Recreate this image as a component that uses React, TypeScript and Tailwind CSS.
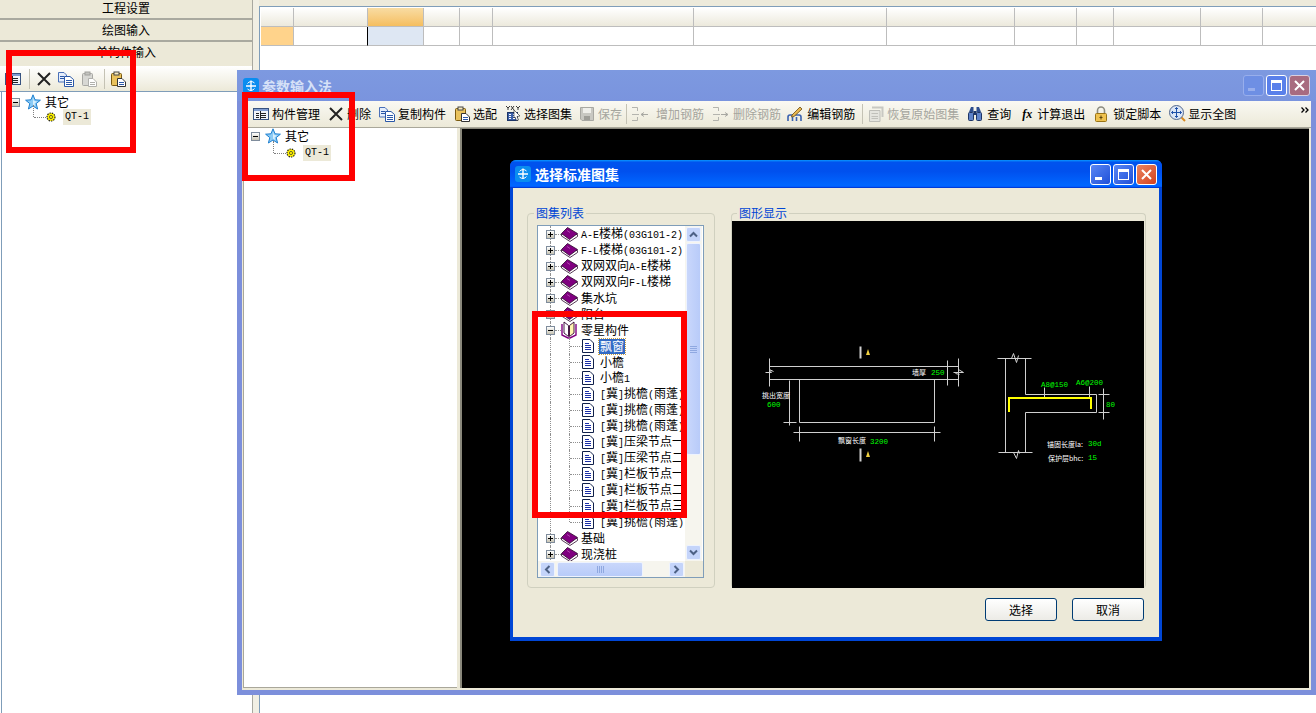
import React from 'react';

// Old Windows XP "Luna" app screenshot. Windows sit on a free canvas, everything inside them flows.

const Sim = ({ text }: { text: string }) => {
  const parts = text.split(/([\x20-\x7e]+)/).filter(Boolean);
  return (
    <>
      {parts.map((p, i) =>
        /^[\x20-\x7e]+$/.test(p) ? (
          <span key={i} className="font-['Liberation_Mono',monospace] text-[10px] whitespace-pre">
            {p}
          </span>
        ) : (
          <span key={i}>{p}</span>
        ),
      )}
    </>
  );
};

const AppIcon = () => (
  <svg width="16" height="16" viewBox="0 0 16 16" className="shrink-0">
    <rect x="0" y="0" width="16" height="16" rx="3" fill="#0A8DF0" />
    <path d="M8 2.5V13M3 8H13" stroke="#fff" strokeWidth="1.4" />
    <path d="M4.5 5.5A4.5 4.5 0 0 1 11.5 5M11.5 10.5A4.5 4.5 0 0 1 4.5 11" stroke="#fff" fill="none" />
  </svg>
);

const Star = () => (
  <svg width="16" height="16" viewBox="0 0 16 16" className="shrink-0">
    <path d="M8 .8 10 5.8 15.4 6.2 11.2 9.6 12.6 15 8 12 3.4 15 4.8 9.6.6 6.2 6 5.8Z" fill="#8CCBF5" stroke="#1D7FD0" />
    <path d="M8 4 9 7 12 7.5 9.6 9.5 10 12 8 10.5Z" fill="#D9F0FD" />
  </svg>
);

const Gear = () => (
  <svg width="10" height="10" viewBox="0 0 10 10" className="shrink-0">
    <circle cx="5" cy="5" r="4" fill="#FFF200" stroke="#222" strokeWidth="1.2" strokeDasharray="1.4 1" />
    <circle cx="5" cy="5" r="1.6" fill="#FFF200" stroke="#333" strokeWidth=".7" />
  </svg>
);

const Book = () => (
  <svg width="17" height="15" viewBox="0 0 17 15" className="shrink-0 -mr-px">
    <path d="M.5 7V9L9 14.5 16.5 9.5V7.5Z" fill="#fff" stroke="#2C0A2C" strokeWidth=".8" />
    <path d="M.5 6.5 6.5.5 16.5 6.5 8.5 12.5Z" fill="#800080" stroke="#2C0A2C" strokeWidth=".8" />
    <path d="M6 3.5 9 5.5" stroke="#B040B0" />
  </svg>
);

const OpenBook = () => (
  <svg width="16" height="18" viewBox="0 0 16 18" className="shrink-0 -my-px">
    <path d="M1 3V14L7 17H9L15 14V3" fill="#fff" stroke="#800080" strokeWidth="1.4" />
    <path d="M3 1 7.5 4.5V15.5L3 12Z" fill="#fff" stroke="#300030" strokeWidth=".9" />
    <path d="M13 1 8.5 4.5V15.5L13 12Z" fill="#FFF6B0" stroke="#300030" strokeWidth=".9" />
  </svg>
);

const Doc = () => (
  <svg width="12" height="14" viewBox="0 0 12 14" className="shrink-0">
    <path d="M.5.5H8L11.5 4V13.5H.5Z" fill="#fff" stroke="#10204A" />
    <path d="M3 4.5H7M3 6.5H9M3 8.5H9M3 10.5H9" stroke="#1B2FA8" />
  </svg>
);

const TableIcon = () => (
  <svg width="16" height="16" viewBox="0 0 16 16" className="shrink-0">
    <rect x=".5" y="2.5" width="15" height="11" fill="#F2F5FA" stroke="#37527F" />
    <rect x="1" y="3" width="14" height="2" fill="#7F9CD0" />
    <path d="M3 7.5H6M3 9.5H6M3 11.5H6M8 7.5H13M8 9.5H13M8 11.5H13M7.5 5V13" stroke="#222" />
  </svg>
);

const XIcon = () => (
  <svg width="16" height="16" viewBox="0 0 16 16" className="shrink-0">
    <path d="M2 2 14 14M14 2 2 14" stroke="#222" strokeWidth="2" />
  </svg>
);

const CopyIcon = () => (
  <svg width="16" height="16" viewBox="0 0 16 16" className="shrink-0">
    <path d="M.5 1.5H6L8.5 4V11H.5Z" fill="#E6EEFB" stroke="#4A70B8" />
    <path d="M6.5 5.5H12L15.5 8.5V15.5H6.5Z" fill="#fff" stroke="#2B58A8" />
    <path d="M8 9.5H14M8 11.5H14M8 13.5H14M2 5.5H6M2 7.5H6" stroke="#2B58A8" />
  </svg>
);

const PasteIcon = ({ off }: { off?: boolean }) => (
  <svg width="16" height="16" viewBox="0 0 16 16" className="shrink-0">
    <rect x="1.5" y="2.5" width="10" height="12" rx="1" fill={off ? '#D8D8D4' : '#E9C25C'} stroke={off ? '#A8A8A4' : '#7A5A10'} />
    <rect x="4" y="1" width="5" height="3" fill={off ? '#C4C4C0' : '#F7EBC0'} stroke={off ? '#A0A09C' : '#444'} />
    <path d="M7.5 7.5H12L15.5 11V15.5H7.5Z" fill="#fff" stroke={off ? '#B0B0AC' : '#333'} />
    <path d="M9 11.5H14M9 13.5H14" stroke={off ? '#B0B0AC' : '#2B58A8'} />
  </svg>
);

const AtlasIcon = () => (
  <svg width="16" height="17" viewBox="0 0 16 17" className="shrink-0">
    <path d="M1 1 3 3 5 1M3 3V5M6 1 9 5M9 1 6 5M11 1 13 3 15 1M13 3V5" stroke="#222" fill="none" strokeWidth=".9" />
    <rect x="2.5" y="7.5" width="10" height="8" fill="#3B5FA8" stroke="#1E3566" />
    <path d="M4 9.5H6M8 9.5H10M4 11.5H6M8 11.5H10M4 13.5H6M8 13.5H10" stroke="#fff" />
    <path d="M9 5 15 11 12 11.5 13.5 15 11.5 15.5 10 12 9 13Z" fill="#fff" stroke="#222" strokeWidth=".6" />
  </svg>
);

const SaveIcon = () => (
  <svg width="16" height="16" viewBox="0 0 16 16" className="shrink-0">
    <path d="M1.5 1.5H14.5V14.5H3L1.5 13Z" fill="#C8C8C2" stroke="#A8A8A2" />
    <rect x="4" y="2" width="8" height="5" fill="#EFEFEA" />
    <rect x="5" y="10" width="6" height="4" fill="#9E9E98" />
  </svg>
);

const RebarIcon = ({ dir }: { dir: 'add' | 'del' }) => (
  <svg width="18" height="16" viewBox="0 0 18 16" className="shrink-0">
    <path d="M1 1.5H6.5V5M1 14.5H6.5V11M1 8.5H8" stroke="#B4B4AE" fill="none" />
    {dir === 'add' ? (
      <path d="M17 8.5H10M13 6.5 10 8.5 13 10.5" stroke="#A8A8A2" fill="none" />
    ) : (
      <path d="M9 8.5H16M13 6.5 16 8.5 13 10.5" stroke="#A8A8A2" fill="none" />
    )}
  </svg>
);

const EditIcon = () => (
  <svg width="16" height="16" viewBox="0 0 16 16" className="shrink-0">
    <path d="M1 15V11Q1 9 3 9H12Q14 9 14 11V15M5.5 15V11M9.5 15V11" stroke="#3A62B0" strokeWidth="1.6" fill="none" />
    <path d="M5 9 13 1 15 3 7 10.5 4.5 11Z" fill="#E9B850" stroke="#6A4A10" strokeWidth=".8" />
  </svg>
);

const RestoreIcon = () => (
  <svg width="16" height="16" viewBox="0 0 16 16" className="shrink-0">
    <path d="M1.5 4.5H12V15.5H1.5Z" fill="#E4E4DE" stroke="#BEBEB8" />
    <path d="M4 1.5H14.5V11" fill="none" stroke="#C8C8C2" strokeWidth="2" />
    <path d="M3.5 7.5H10M3.5 10.5H10M3.5 12.5H10" stroke="#C0C0BA" />
  </svg>
);

const BinocularIcon = () => (
  <svg width="16" height="16" viewBox="0 0 16 16" className="shrink-0">
    <path d="M2 6 4 1H6.5V6Z M14 6 12 1H9.5V6Z" fill="#2E4E8E" />
    <rect x="1.5" y="6.5" width="5" height="8" rx="1" fill="#5E82C8" stroke="#1E3566" />
    <rect x="9.5" y="6.5" width="5" height="8" rx="1" fill="#5E82C8" stroke="#1E3566" />
    <rect x="6.5" y="5" width="3" height="4" fill="#1E3566" />
  </svg>
);

const LockIcon = () => (
  <svg width="16" height="16" viewBox="0 0 16 16" className="shrink-0">
    <path d="M4.5 7V4.5A3.5 3.5 0 0 1 11.5 4.5V7" stroke="#8C8C80" strokeWidth="1.6" fill="none" />
    <rect x="2.5" y="7.5" width="11" height="8" rx="1" fill="#EFC24E" stroke="#9A7414" />
    <path d="M8 9.5V13.5M6.5 11.5H9.5" stroke="#5A4208" />
  </svg>
);

const ZoomAllIcon = () => (
  <svg width="17" height="17" viewBox="0 0 17 17" className="shrink-0">
    <path d="M12 12 16 16" stroke="#D98A20" strokeWidth="2" />
    <circle cx="7.5" cy="7.5" r="7" fill="#DCE6F6" stroke="#52678C" />
    <path d="M7.5 2.5V12.5M2.5 7.5H12.5M6 4 7.5 2.5 9 4M6 11 7.5 12.5 9 11M4 6 2.5 7.5 4 9M11 6 12.5 7.5 11 9" stroke="#1E50A8" fill="none" />
  </svg>
);

const Tool = ({ icon, label, off, gap = 'mr-[3px]', after = 'mr-2' }: { icon: React.ReactNode; label: string; off?: boolean; gap?: string; after?: string }) => (
  <div className={`flex items-center shrink-0 ${after} ${off ? 'text-[#A5A59E]' : 'text-black'}`}>
    <span className={gap + ' flex'}>{icon}</span>
    <span className="whitespace-nowrap">{label}</span>
  </div>
);

const ToolSep = ({ className = '' }: { className?: string }) => <div className={`w-px h-5 bg-[#C4C2B4] shrink-0 ${className}`} />;

const MiniTree = ({ className, rowGap = '' }: { className: string; rowGap?: string }) => (
  <div className={`relative ${className}`}>
    <div className="flex items-center h-4">
      <div className="w-[9px] h-[9px] border border-[#7F8C9C] bg-gradient-to-b from-white to-[#C8C4B4] flex items-center justify-center">
        <div className="w-[5px] h-px bg-black" />
      </div>
      <div className="ml-[5px]"><Star /></div>
      <span className="ml-[4px] text-black">其它</span>
    </div>
    <div className={`relative flex items-center h-4 pl-[35px] ${rowGap}`}>
      <div className="absolute left-[22px] -top-[4px] h-[12px] border-l border-dotted border-[#808080]" />
      <div className="absolute left-[23px] top-[8px] w-[12px] border-t border-dotted border-[#808080]" />
      <Gear />
      <span className="ml-[7px] bg-[#ECE9D8] px-[2px] h-4 flex items-center text-black"><Sim text="QT-1" /></span>
    </div>
  </div>
);

const Plus = ({ open }: { open?: boolean }) => (
  <div className="ml-2 w-[9px] h-[9px] border border-[#7F8C9C] bg-gradient-to-b from-white to-[#C8C4B4] flex items-center justify-center relative shrink-0">
    <div className="w-[5px] h-px bg-black" />
    {!open && <div className="absolute w-px h-[5px] bg-black" />}
  </div>
);

const TopRow = ({ label, open }: { label: string; open?: boolean }) => (
  <div className="relative flex items-center h-4 whitespace-nowrap">
    <div className="absolute left-3 top-0 h-full border-l border-dotted border-[#909090]" />
    <Plus open={open} />
    <div className="w-[6px] border-t border-dotted border-[#909090] shrink-0" />
    {open ? <OpenBook /> : <Book />}
    <span className="ml-1 text-black"><Sim text={label} /></span>
  </div>
);

const ChildRow = ({ label, selected, last }: { label: string; selected?: boolean; last?: boolean }) => (
  <div className="relative flex items-center h-4 whitespace-nowrap">
    <div className="absolute left-3 top-0 h-full border-l border-dotted border-[#909090]" />
    <div className={`absolute left-[31px] top-0 border-l border-dotted border-[#909090] ${last ? 'h-2' : 'h-full'}`} />
    <div className="ml-[32px] w-3 border-t border-dotted border-[#909090] shrink-0" />
    <Doc />
    {selected ? (
      <span className="ml-[5px] px-px h-[15px] flex items-center bg-[#316AC5] text-white outline-1 outline-dotted outline-[#C9A040]">{label}</span>
    ) : (
      <span className="ml-[6px] text-black"><Sim text={label} /></span>
    )}
  </div>
);

const ScrollBtn = ({ d }: { d: string }) => (
  <div className="w-[15px] h-[15px] rounded-[2px] bg-[#C4D4FA] border border-[#EEF3FE] flex items-center justify-center shrink-0">
    <svg width="9" height="7" viewBox="0 0 9 7">
      <path d={d} stroke="#4D6185" strokeWidth="2" fill="none" />
    </svg>
  </div>
);

const ImageTree = () => (
  <div className="w-[167px] h-[353px] border border-[#7F9DB9] bg-white flex flex-col shrink-0 ml-[9px] mt-[11px]">
    <div className="flex h-[335px]">
      <div className="flex-1 overflow-hidden pt-0">
        <TopRow label="A-E楼梯(03G101-2)" />
        <TopRow label="F-L楼梯(03G101-2)" />
        <TopRow label="双网双向A-E楼梯" />
        <TopRow label="双网双向F-L楼梯" />
        <TopRow label="集水坑" />
        <TopRow label="阳台" />
        <TopRow label="零星构件" open />
        <ChildRow label="飘窗" selected />
        <ChildRow label="小檐" />
        <ChildRow label="小檐1" />
        <ChildRow label="[冀]挑檐(雨蓬)" />
        <ChildRow label="[冀]挑檐(雨蓬)" />
        <ChildRow label="[冀]挑檐(雨蓬)" />
        <ChildRow label="[冀]压梁节点一" />
        <ChildRow label="[冀]压梁节点二" />
        <ChildRow label="[冀]栏板节点一" />
        <ChildRow label="[冀]栏板节点二" />
        <ChildRow label="[冀]栏板节点三" />
        <ChildRow label="[冀]挑檐(雨蓬)" last />
        <TopRow label="基础" />
        <TopRow label="现浇桩" />
      </div>
      <div className="w-[17px] mr-px bg-[#F6F5EE] flex flex-col items-center pt-px pb-px">
        <ScrollBtn d="M1 5.5 4.5 2 8 5.5" />
        <div className="w-[15px] h-[212px] mt-px rounded-[2px] bg-gradient-to-r from-[#C9D7FB] to-[#B8CBF9] border border-[#EEF3FE] flex flex-col items-center justify-center gap-px">
          <div className="w-[7px] h-px bg-[#8FA8E0]" />
          <div className="w-[7px] h-px bg-[#8FA8E0]" />
          <div className="w-[7px] h-px bg-[#8FA8E0]" />
          <div className="w-[7px] h-px bg-[#8FA8E0]" />
        </div>
        <div className="flex-1" />
        <ScrollBtn d="M1 1.5 4.5 5 8 1.5" />
      </div>
    </div>
    <div className="flex h-[16px] items-center pl-[2px] bg-[#F6F5EE]">
      <div className="rotate-[-90deg]"><ScrollBtn d="M1 5.5 4.5 2 8 5.5" /></div>
      <div className="ml-[2px] w-[86px] h-[15px] rounded-[2px] bg-gradient-to-b from-[#C9D7FB] to-[#B8CBF9] border border-[#EEF3FE] flex items-center justify-center gap-px">
        <div className="w-px h-[7px] bg-[#8FA8E0]" />
        <div className="w-px h-[7px] bg-[#8FA8E0]" />
        <div className="w-px h-[7px] bg-[#8FA8E0]" />
        <div className="w-px h-[7px] bg-[#8FA8E0]" />
      </div>
      <div className="ml-[26px] rotate-90"><ScrollBtn d="M1 5.5 4.5 2 8 5.5" /></div>
      <div className="flex-1 h-full bg-[#ECE9D8] ml-px" />
    </div>
  </div>
);

const Drawing = () => {
  const white = '#D0D0D0';
  return (
    <svg viewBox="732 221 412 367" className="w-full h-full block" fontFamily="'Noto Sans CJK SC',sans-serif">
      <g stroke={white} fill="none" strokeWidth="1" transform="translate(.5 .5)">
        <path d="M769 366H958M769 379H958M769 358V386M958 358V386M947 360V385" />
        <path d="M765 372H771L769 369 773 371M953 372H963L958 369M955 373 959 374" />
        <path d="M799 379V422H934V379M789 380V425M783 422H796" />
        <path d="M793 432H940M799 426V441M934 426V441" />
        <path d="M860 346V358M860 448V461" strokeWidth="2" />
        {/* second detail */}
        <path d="M997 358H1031M998 452H1032M1005 358V452M1025 358V394H1096V412H1025V452" />
        <path d="M1011 358 1013 353 1016 362 1018 355M1013 452 1016 458 1018 450 1019 453" />
        <path d="M1103 388V419M1098 394H1109M1098 412H1109M1044 387V398M1089 386V398" />
      </g>
      <path d="M1009 412V398H1091V409" stroke="#FFFF00" strokeWidth="2" fill="none" />
      <path d="M868 349 870 355H866Z M868 451 870 457H866Z" fill="#F0D040" />
      <g fontSize="7" fill="#fff">
        <text x="912" y="375">墙厚</text>
        <text x="762" y="398">挑出宽度</text>
        <text x="838" y="443">飘窗长度</text>
        <text x="1047" y="447">锚固长度la:</text>
        <text x="1048" y="461">保护层bhc:</text>
      </g>
      <g fontSize="7.5" fill="#00FF00" fontFamily="'Liberation Mono',monospace">
        <text x="931" y="375">250</text>
        <text x="767" y="407">600</text>
        <text x="870" y="444">3200</text>
        <text x="1041" y="387">A8@150</text>
        <text x="1076" y="385">A6@200</text>
        <text x="1106" y="407">80</text>
        <text x="1088" y="446">30d</text>
        <text x="1088" y="460">15</text>
      </g>
    </svg>
  );
};

const cols = [33, 74, 56, 36, 33, 201, 193, 128, 62, 37, 87, 62, 54];

const GridRow = ({ header }: { header?: boolean }) => (
  <div className="flex">
    {cols.map((w, i) => {
      let bg = header ? 'bg-gradient-to-b from-white to-[#ECE9DC]' : 'bg-white';
      if (header && i === 2) bg = 'bg-gradient-to-b from-[#F8DCA2] to-[#F5BE5E]';
      if (!header && i === 0) bg = 'bg-[#FFD38B]';
      if (!header && i === 2) bg = 'bg-[#DEE7F3]';
      const black = !header && i === 1;
      return (
        <div
          key={i}
          style={{ width: w }}
          className={`shrink-0 h-[19px] border-b border-[#BDBDBD] border-r ${black ? 'border-r-black' : ''} ${bg}`}
        />
      );
    })}
  </div>
);

const LunaBtn = ({ label }: { label: string }) => (
  <div className="w-[72px] h-[23px] border border-[#003C74] rounded-[3px] bg-gradient-to-b from-white to-[#ECEBE6] flex items-center justify-center text-black">
    {label}
  </div>
);

const TitleBtn = ({ kind, dim }: { kind: 'min' | 'max' | 'close'; dim?: boolean }) => {
  let cls = 'bg-gradient-to-br from-[#5A86F4] to-[#1F4FD8] border-white';
  if (kind === 'close') cls = 'bg-gradient-to-br from-[#E9835F] to-[#D5401C] border-white';
  if (dim) {
    cls = 'bg-[#6E8FE4] border-[#98AEEC]';
    if (kind === 'max') cls = 'bg-[#5A80EA] border-white';
    if (kind === 'close') cls = 'bg-[#A86B80] border-[#D9D0E0]';
  }
  return (
    <div className={`w-[21px] h-[21px] rounded-[3px] border flex items-center justify-center relative ${cls}`}>
      {kind === 'min' && <div className={`absolute left-[4px] bottom-[4px] w-[7px] h-[3px] ${dim ? 'bg-[#98AEEC]' : 'bg-white'}`} />}
      {kind === 'max' && <div className="w-[11px] h-[11px] border border-t-[3px] border-white" />}
      {kind === 'close' && (
        <svg width="13" height="13" viewBox="0 0 13 13">
          <path d="M2 2 11 11M11 2 2 11" stroke="#fff" strokeWidth="2" />
        </svg>
      )}
    </div>
  );
};

const RedBox = ({ className }: { className: string }) => (
  <div className={`absolute border-[6px] border-[#FF0000] ${className}`} />
);

export default function App() {
  return (
    <div className="relative w-[1316px] h-[713px] overflow-hidden bg-white text-[12px] leading-none font-['Noto_Sans_CJK_SC',sans-serif] flex">
      {/* left panel */}
      <div className="w-[253px] h-full shrink-0 flex flex-col border-r border-[#A8A8A0]">
        <div className="h-[20px] shrink-0 pb-[2px] bg-[#ECE9D8] border-b-2 border-b-[#A9A99F] flex items-center justify-center">工程设置</div>
        <div className="h-[22px] shrink-0 bg-[#ECE9D8] border-b-2 border-b-[#A9A99F] flex items-center justify-center">绘图输入</div>
        <div className="h-[24px] shrink-0 pb-1 bg-[#ECE9D8] flex items-center justify-center">单构件输入</div>
        <div className="h-[26px] shrink-0 pl-[5px] flex items-center bg-gradient-to-b from-white to-[#ECE9D8] border-b border-[#7F9DB9]">
          <TableIcon />
          <ToolSep className="ml-2 mr-[6px]" />
          <XIcon />
          <div className="ml-[6px]"><CopyIcon /></div>
          <div className="ml-[7px]"><PasteIcon off /></div>
          <ToolSep className="ml-[7px] mr-[5px]" />
          <PasteIcon />
        </div>
        <div className="flex-1 border-l border-[#7F9DB9] ml-px">
          <MiniTree className="pl-[9px] pt-[2px]" rowGap="-mt-px" />
        </div>
      </div>
      <div className="w-[6px] h-full shrink-0 bg-[#F1EFE4]" />
      {/* grid side */}
      <div className="flex-1 h-full flex flex-col border-l border-[#7F9DB9]">
        <div className="h-[7px] shrink-0 bg-[#EDEADB] border-b border-[#7F9DB9] -ml-px" />
        <div className="pl-px pt-px">
          <GridRow header />
          <GridRow />
        </div>
      </div>

      {/* 参数输入法 window */}
      <div className="absolute left-[237px] top-[70px] w-[1079px] h-[625px] flex flex-col bg-[#7C8FDB] rounded-t-[6px] shadow-[inset_0_1px_0_#9DB2EC]">
        <div className="h-[31px] shrink-0 flex items-center pl-[6px] pr-[6px] bg-gradient-to-b from-[#7D99E0] to-[#7A94DE]">
          <AppIcon />
          <span className="ml-[3px] text-[14px] font-bold text-[#D6E1F7]">参数输入法</span>
          <div className="ml-auto flex gap-[2px]">
            <TitleBtn kind="min" dim />
            <TitleBtn kind="max" dim />
            <TitleBtn kind="close" dim />
          </div>
        </div>
        <div className="flex-1 mx-[5px] mb-[5px] bg-[#ECE9D8] flex flex-col">
          <div className="h-[27px] shrink-0 flex items-center pl-[11px] pb-px bg-gradient-to-b from-[#FAF9F3] to-[#ECE9D8] border-b border-[#A9A79A] relative">
            <Tool icon={<TableIcon />} label="构件管理" />
            <Tool icon={<XIcon />} label="删除" />
            <Tool icon={<CopyIcon />} label="复制构件" />
            <Tool icon={<PasteIcon />} label="选配" />
            <Tool icon={<AtlasIcon />} label="选择图集" />
            <div className="-ml-[1px]" />
            <Tool icon={<SaveIcon />} label="保存" off />
            <ToolSep className="-ml-[4px] mr-[4px]" />
            <Tool icon={<RebarIcon dir="add" />} label="增加钢筋" off gap="mr-[7px]" />
            <Tool icon={<RebarIcon dir="del" />} label="删除钢筋" off gap="mr-[3px]" after="mr-[6px]" />
            <Tool icon={<EditIcon />} label="编辑钢筋" gap="mr-[4px]" after="mr-[7px]" />
            <ToolSep className="mr-[5px]" />
            <Tool icon={<RestoreIcon />} label="恢复原始图集" off gap="mr-[3px]" />
            <Tool icon={<BinocularIcon />} label="查询" gap="mr-[4px]" />
            <Tool icon={<span className="w-4 h-4 flex items-center justify-center font-['Liberation_Serif',serif] italic font-bold text-[12px] text-black">fx</span>} label="计算退出" gap="mr-[2px]" />
            <Tool icon={<LockIcon />} label="锁定脚本" gap="mr-[4px]" />
            <Tool icon={<ZoomAllIcon />} label="显示全图" gap="mr-[2px]" />
            <svg width="9" height="6" viewBox="0 0 9 6" className="absolute left-[1059px] top-[6px]">
              <path d="M.5.5 3 3 .5 5.5M4.5.5 7 3 4.5 5.5" stroke="#000" strokeWidth="1.3" fill="none" />
            </svg>
          </div>
          <div className="flex-1 flex pl-px pr-[2px] pb-[2px] min-h-0">
            <div className="w-[214px] h-full bg-white border-l border-b border-[#A9A79A]">
              <MiniTree className="pl-[7px] pt-0" rowGap="mt-px" />
            </div>
            <div className="flex-1 ml-[3px] bg-black border-l-2 border-t border-[#8A887C]" />
          </div>
        </div>
      </div>

      {/* 选择标准图集 dialog */}
      <div className="absolute left-[510px] top-[160px] w-[652px] h-[481px] flex flex-col rounded-t-[6px] bg-[#0046D5]">
        <div className="h-[28px] shrink-0 flex items-center pl-[5px] pr-[5px] rounded-t-[6px] bg-[linear-gradient(180deg,#0997ff,#0053ee_8%,#0050ee_40%,#0066ff_88%,#0066ff_93%,#005bff_95%,#003dd7_96%,#003dd7)]">
          <AppIcon />
          <span className="ml-[4px] text-[14px] font-bold text-white">选择标准图集</span>
          <div className="ml-auto flex gap-[2px]">
            <TitleBtn kind="min" />
            <TitleBtn kind="max" />
            <TitleBtn kind="close" />
          </div>
        </div>
        <div className="flex-1 ml-[3px] mr-[3px] mb-[4px] bg-[#ECE9D8] flex flex-col pl-[14px] pr-[15px] pt-[25px]">
          <div className="flex h-[375px] gap-4">
            <div className="relative w-[188px] h-full border border-[#D0D0BF] rounded-[4px] shrink-0">
              <span className="absolute left-[6px] -top-[7px] px-[2px] bg-[#ECE9D8] text-[#0046D5]">图集列表</span>
              <ImageTree />
            </div>
            <div className="relative flex-1 -mr-[2px] h-full border border-[#D0D0BF] rounded-[4px] border-b-0 pt-[7px]">
              <span className="absolute left-[5px] -top-[7px] px-[2px] bg-[#ECE9D8] text-[#0046D5]">图形显示</span>
              <div className="h-[367px] mr-px bg-black"><Drawing /></div>
            </div>
          </div>
          <div className="flex justify-end gap-[15px] pt-[10px]">
            <LunaBtn label="选择" />
            <LunaBtn label="取消" />
          </div>
        </div>
      </div>

      <RedBox className="left-[6px] top-[50px] w-[130px] h-[103px]" />
      <RedBox className="left-[242px] top-[92px] w-[113px] h-[89px]" />
      <RedBox className="left-[532px] top-[311px] w-[155px] h-[207px]" />
    </div>
  );
}
